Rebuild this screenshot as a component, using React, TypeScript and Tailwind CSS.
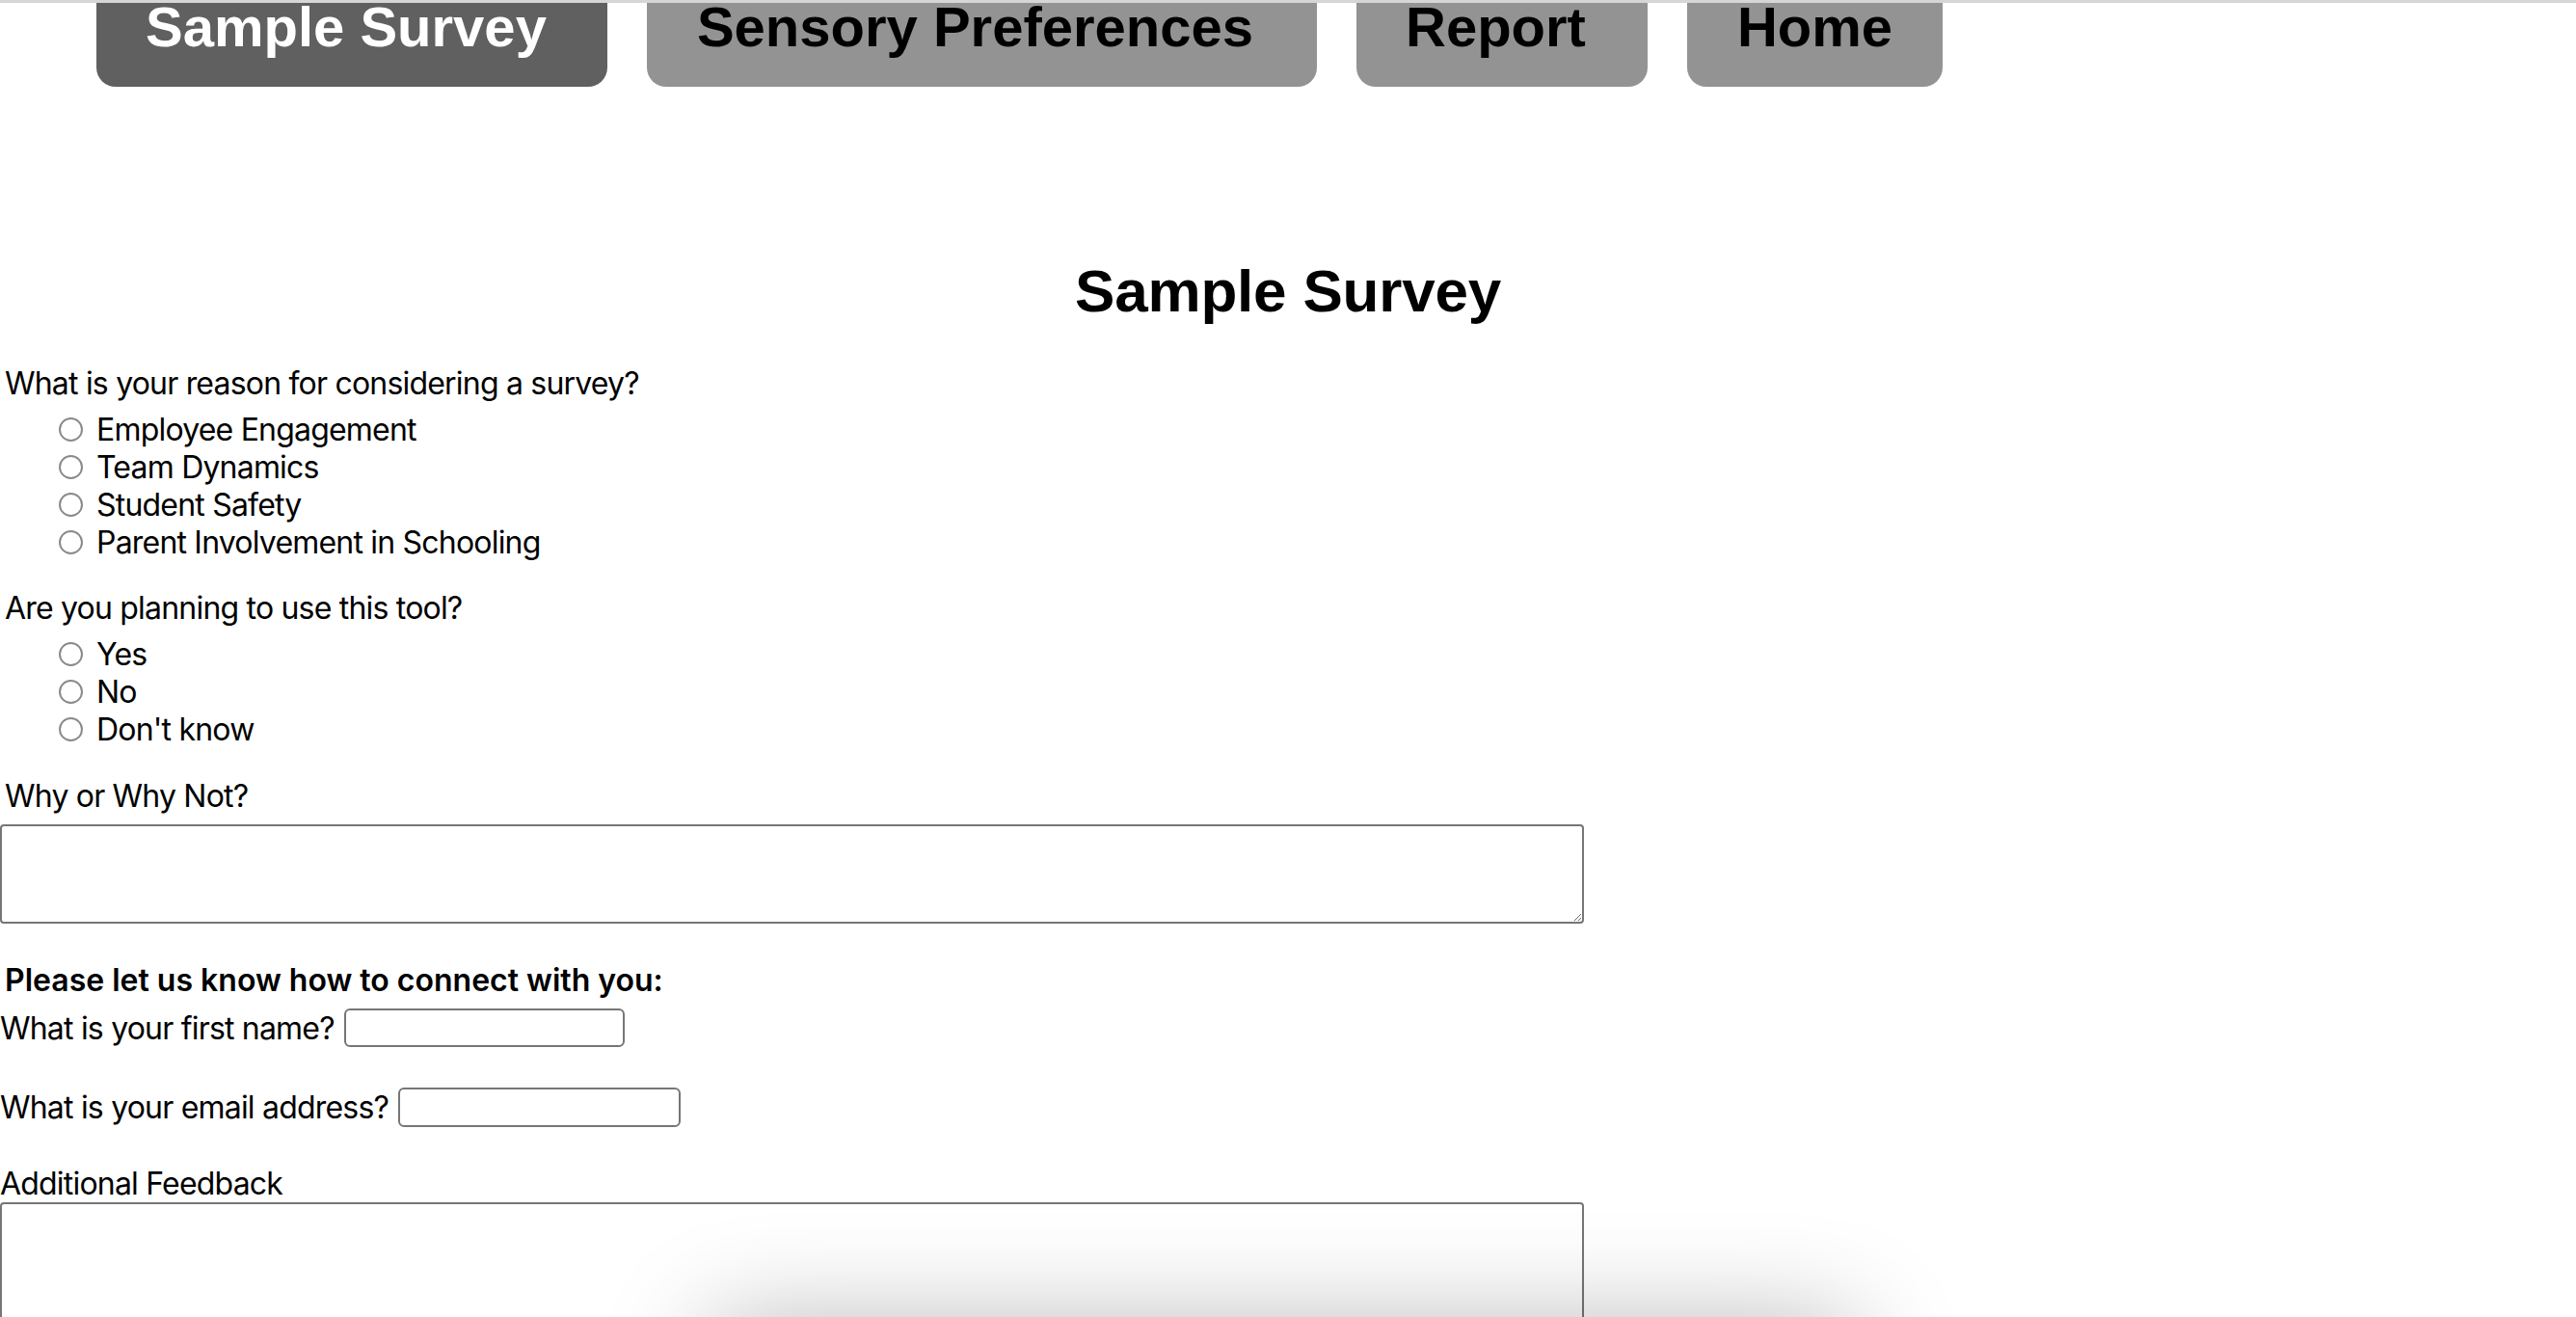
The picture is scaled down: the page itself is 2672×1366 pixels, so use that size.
import React from "react"

const tabs = [
  { label: "Sample Survey", cls: "bg-[#5f605f] text-white pl-[51px] pr-[63px]" },
  { label: "Sensory Preferences", cls: "bg-[#929392] text-black pl-[52px] pr-[66px]" },
  { label: "Report", cls: "bg-[#929392] text-black pl-[51px] pr-[64px]" },
  { label: "Home", cls: "bg-[#929392] text-black px-[52px]" },
]

const reasons = [
  "Employee Engagement",
  "Team Dynamics",
  "Student Safety",
  "Parent Involvement in Schooling",
]

const planning = ["Yes", "No", "Don't know"]

function Choice({ name, label }: { name: string; label: string }) {
  return (
    <label className="flex items-center h-[39px] pl-[61px]">
      <input
        type="radio"
        name={name}
        className="appearance-none shrink-0 m-0 w-[25px] h-[25px] rounded-full border-2 border-[#8a8a8a] bg-white"
      />
      <span className="ml-[14px]">{label}</span>
    </label>
  )
}

export default function App() {
  return (
    <div className="min-h-screen bg-white text-black font-['Inter','Noto_Sans',sans-serif] overflow-hidden">
      {/* top nav */}
      <div className="border-t-[3px] border-[#d6d6d6]">
        <nav className="flex gap-[41px] pl-[100px]">
          {tabs.map((t) => (
            <a
              key={t.label}
              className={`h-[87px] rounded-b-[20px] font-['Liberation_Sans',Arial,sans-serif] font-bold text-[58px] leading-[50px] whitespace-nowrap ${t.cls}`}
            >
              {t.label}
            </a>
          ))}
        </nav>
      </div>

      <h1 className="mt-[176px] text-center font-['Liberation_Sans',Arial,sans-serif] font-bold text-[62px] leading-[72px] tracking-[-0.2px]">
        Sample Survey
      </h1>

      <form className="text-[32px] leading-[39px] tracking-[-0.8px]">
        <p className="mt-[40px] pl-[5px]">What is your reason for considering a survey?</p>
        <div className="mt-[9px]">
          {reasons.map((r) => (
            <Choice key={r} name="reason" label={r} />
          ))}
        </div>

        <p className="mt-[29px] pl-[5px]">Are you planning to use this tool?</p>
        <div className="mt-[9px]">
          {planning.map((p) => (
            <Choice key={p} name="planning" label={p} />
          ))}
        </div>

        <p className="mt-[30px] pl-[5px]">Why or Why Not?</p>
        <textarea className="block mt-[10px] w-[1643px] h-[103px] border-2 border-[#767676] rounded-[4px] bg-transparent" />

        <p className="mt-[39px] pl-[5px] font-semibold tracking-normal">Please let us know how to connect with you:</p>
        <div className="mt-[10px] flex items-center h-[40px]">
          <span>What is your first name?</span>
          <input type="text" className="ml-[10px] w-[291px] h-[40px] border-2 border-[#767676] rounded-[6px]" />
        </div>
        <div className="mt-[42px] flex items-center h-[41px]">
          <span>What is your email address?</span>
          <input type="email" className="ml-[10px] w-[293px] h-[41px] border-2 border-[#767676] rounded-[6px]" />
        </div>

        <p className="mt-[39px]">Additional Feedback</p>
        <textarea className="block w-[1643px] h-[160px] border-2 border-[#767676] rounded-[4px] bg-transparent" />

        {/* card below the fold, only its shadow shows */}
        <div className="mt-[4px] ml-[735px] w-[1190px] h-[300px] bg-white rounded-[20px] shadow-[0_-40px_110px_rgba(0,0,0,0.28)]" />
      </form>
    </div>
  )
}
